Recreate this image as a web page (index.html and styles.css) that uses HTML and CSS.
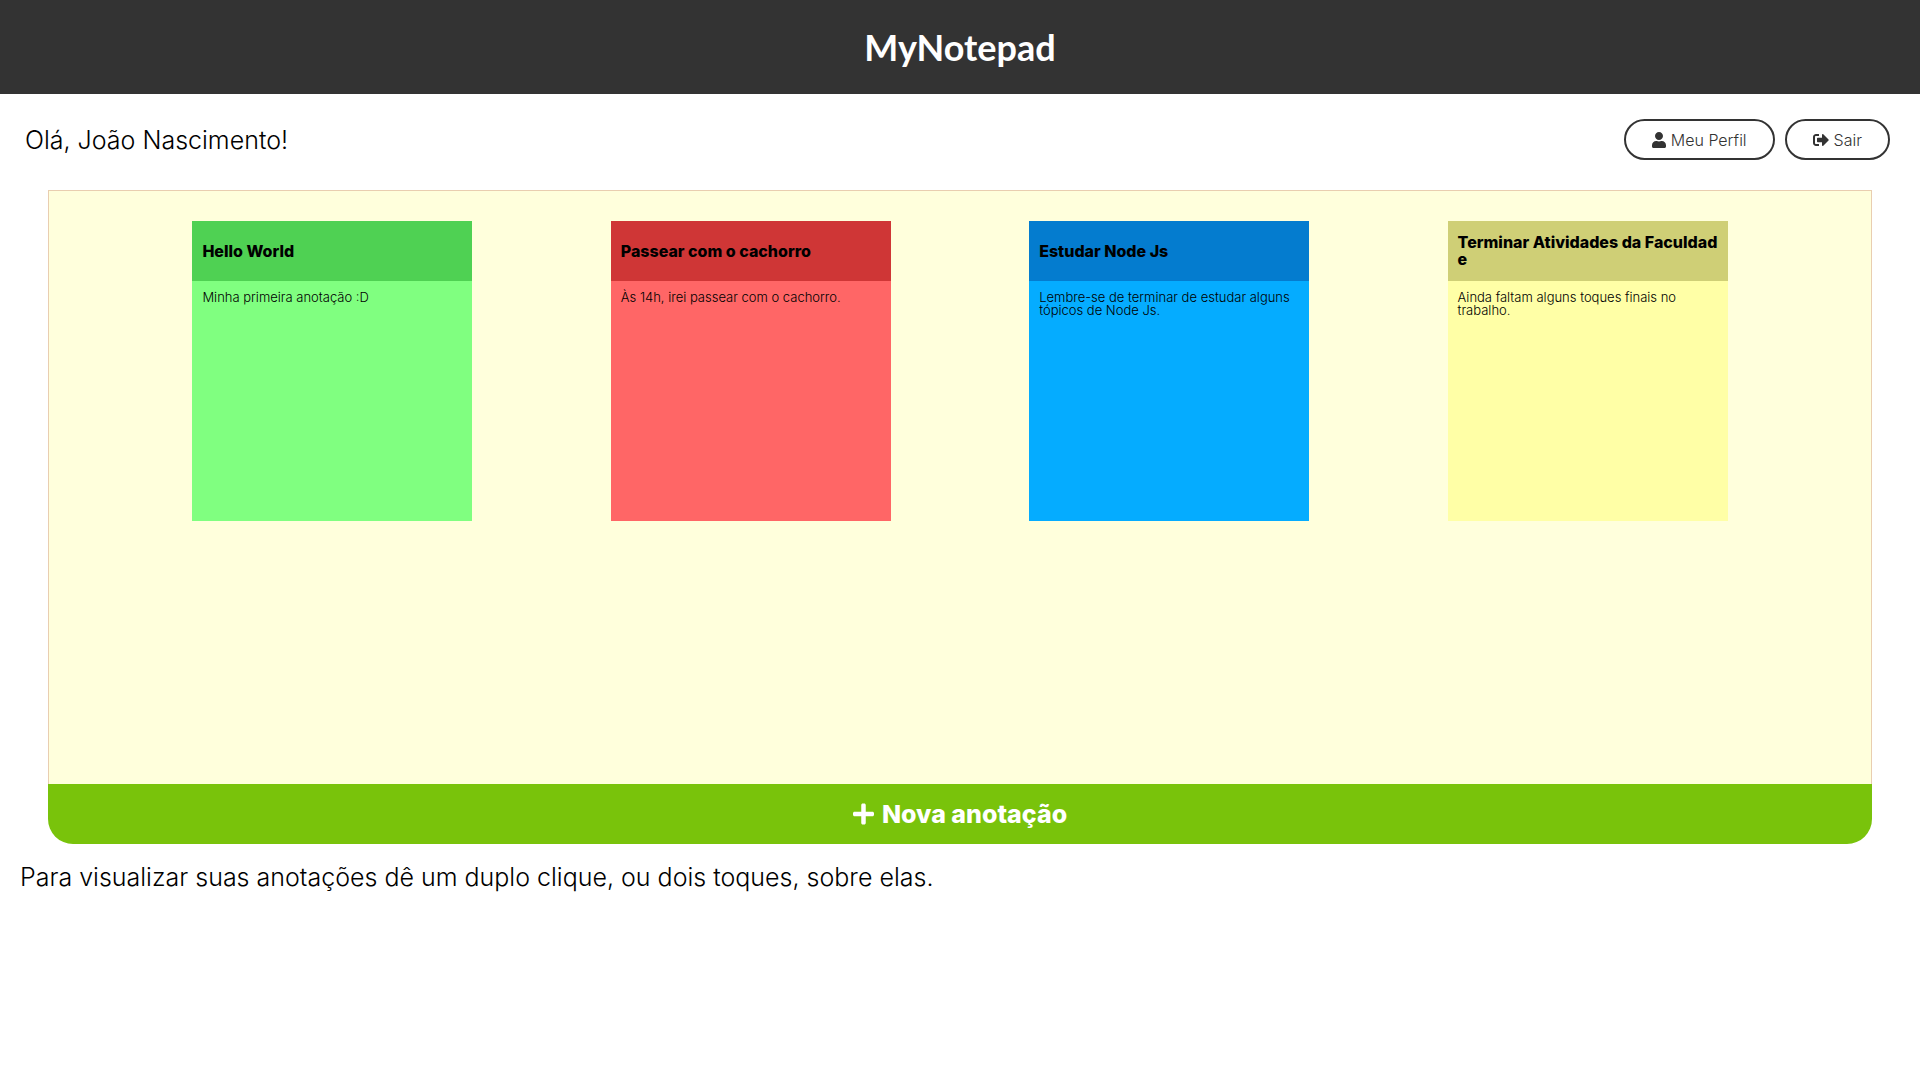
FILE: index.html
```html
<!DOCTYPE html>
<html lang="pt-BR">
<head>
  <meta charset="UTF-8">
  <meta name="viewport" content="width=device-width, initial-scale=1">
  <title>MyNotepad</title>
  <link rel="stylesheet" href="styles.css">
</head>
<body>
  <header class="site-header">
    <h1 class="logo">MyNotepad</h1>
  </header>

  <main>
    <div class="user-bar">
      <p class="greeting">Olá, João Nascimento!</p>
      <nav class="user-actions">
        <button type="button" class="pill">
          <svg class="icon icon-user" viewBox="0 0 448 512" aria-hidden="true"><path d="M224 256c70.700 0 128-57.300 128-128S294.700 0 224 0 96 57.300 96 128s57.300 128 128 128zm89.600 32h-16.700c-22.200 10.200-46.900 16-72.900 16s-50.600-5.800-72.900-16h-16.700C60.200 288 0 348.200 0 422.400V464c0 26.500 21.500 48 48 48h352c26.500 0 48-21.500 48-48v-41.600c0-74.200-60.200-134.400-134.400-134.400z"/></svg>
          <span>Meu Perfil</span>
        </button>
        <button type="button" class="pill">
          <svg class="icon icon-exit" viewBox="0 0 512 512" aria-hidden="true"><path d="M497 273L329 441c-15 15-41 4.500-41-17v-96H152c-13.300 0-24-10.700-24-24v-96c0-13.300 10.700-24 24-24h136V88c0-21.400 25.900-32 41-17l168 168c9.300 9.400 9.300 24.600 0 34zM192 436v-40c0-6.600-5.400-12-12-12H96c-17.700 0-32-14.300-32-32V160c0-17.700 14.300-32 32-32h84c6.600 0 12-5.400 12-12V76c0-6.600-5.400-12-12-12H96c-53 0-96 43-96 96v192c0 53 43 96 96 96h84c6.600 0 12-5.400 12-12z"/></svg>
          <span>Sair</span>
        </button>
      </nav>
    </div>

    <section class="board" aria-label="Anotações">
      <div class="notes">
        <article class="note note-green">
          <h2 class="note-title">Hello World</h2>
          <p class="note-text">Minha primeira anotação :D</p>
        </article>
        <article class="note note-red">
          <h2 class="note-title">Passear com o cachorro</h2>
          <p class="note-text">Às 14h, irei passear com o cachorro.</p>
        </article>
        <article class="note note-blue">
          <h2 class="note-title">Estudar Node Js</h2>
          <p class="note-text">Lembre-se de terminar de estudar alguns tópicos de Node Js.</p>
        </article>
        <article class="note note-yellow">
          <h2 class="note-title">Terminar Atividades da Faculdade</h2>
          <p class="note-text">Ainda faltam alguns toques finais no trabalho.</p>
        </article>
      </div>
      <button type="button" class="new-note">
        <svg class="icon icon-plus" viewBox="0 0 448 512" aria-hidden="true"><path d="M416 208H272V64c0-17.700-14.300-32-32-32h-32c-17.700 0-32 14.300-32 32v144H32c-17.700 0-32 14.300-32 32v32c0 17.700 14.300 32 32 32h144v144c0 17.700 14.300 32 32 32h32c17.700 0 32-14.300 32-32V304h144c17.700 0 32-14.300 32-32v-32c0-17.700-14.300-32-32-32z"/></svg>
        <span>Nova anotação</span>
      </button>
    </section>

    <p class="hint">Para visualizar suas anotações dê um duplo clique, ou dois toques, sobre elas.</p>
  </main>
</body>
</html>
```

FILE: styles.css
```css
* {
  box-sizing: border-box;
  margin: 0;
  padding: 0;
}

body {
  background: #fff;
  color: #000;
  font-family: Inter, "Open Sans", sans-serif;
  font-weight: 300;
}

.site-header {
  display: flex;
  align-items: center;
  justify-content: center;
  height: 94px;
  background: #333;
}

.logo {
  color: #fff;
  font-family: Lato, sans-serif;
  font-size: 36px;
  font-weight: 700;
  line-height: 48px;
}

.user-bar {
  display: flex;
  align-items: center;
  justify-content: space-between;
  padding: 25px 30px 30px 25px;
}

.greeting,
.hint {
  font-size: 25px;
  line-height: 30px;
}

.user-actions {
  display: flex;
  gap: 10px;
}

.pill {
  display: flex;
  align-items: center;
  gap: 5px;
  height: 41px;
  padding: 0 26px;
  border: 2px solid #333;
  border-radius: 21px;
  background: #fff;
  color: #333;
  font: inherit;
  font-size: 16px;
  cursor: pointer;
}

.icon {
  flex: none;
  fill: currentColor;
}

.icon-user {
  width: 14px;
  height: 16px;
}

.icon-exit {
  width: 16px;
  height: 16px;
}

.icon-plus {
  width: 21px;
  height: 24px;
}

.board {
  margin: 0 48px;
}

.notes {
  display: flex;
  flex-wrap: wrap;
  justify-content: space-evenly;
  align-content: flex-start;
  min-height: 594px;
  padding: 30px 5px;
  border: 1px solid #e9ceb0;
  border-bottom: 0;
  background: #ffffdc;
}

.note {
  width: 280px;
  min-height: 300px;
}

.note-title {
  display: flex;
  align-items: center;
  height: 60px;
  padding: 0 10px;
  font-size: 16px;
  font-weight: 800;
  line-height: 17px;
  word-break: break-all;
}

.note-text {
  padding: 10px;
  font-size: 13px;
  line-height: 13px;
}

.note-green { background: #80ff80; }
.note-green .note-title { background: #4fd153; }
.note-red { background: #ff6666; }
.note-red .note-title { background: #cf3636; }
.note-blue { background: #05acff; }
.note-blue .note-title { background: #047ccf; }
.note-yellow { background: #ffffa6; }
.note-yellow .note-title { background: #cfcf76; }

.new-note {
  display: flex;
  align-items: center;
  justify-content: center;
  gap: 8px;
  width: 100%;
  height: 60px;
  border: 0;
  border-radius: 0 0 25px 25px;
  background: #79c30b;
  color: #fff;
  font: inherit;
  font-size: 25px;
  font-weight: 800;
  cursor: pointer;
}

.hint {
  padding: 18px 20px;
}
```
